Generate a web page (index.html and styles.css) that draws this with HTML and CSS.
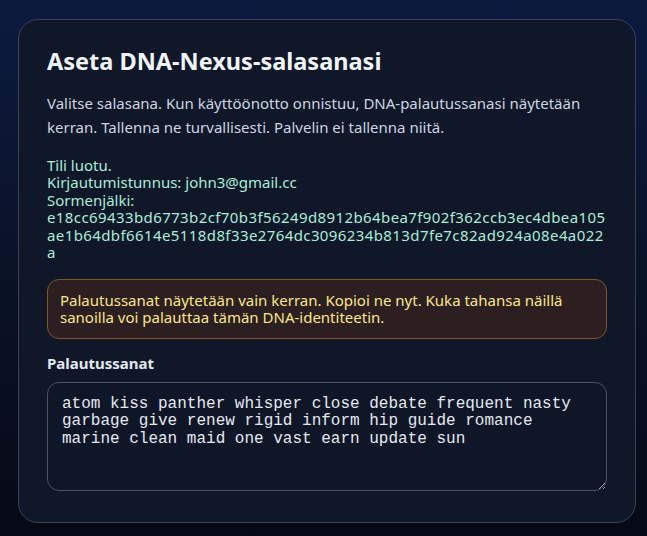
FILE: index.html
```html
<!DOCTYPE html>
<html lang="fi">
<head>
    <meta charset="UTF-8">
    <meta name="viewport" content="width=device-width, initial-scale=1.0">
    <link rel="stylesheet" href="styles.css">
    <title>Aseta DNA-Nexus-salasanasi</title>
</head>
<body>
    <div class="pagina">
        <div class="cartao">
            <h1 class="titulo">Aseta DNA-Nexus-salasanasi</h1>
            <p class="intro">Valitse salasana. Kun käyttöönotto onnistuu, DNA-palautussanasi näytetään kerran. Tallenna ne turvallisesti. Palvelin ei tallenna niitä.</p>

            <div class="status">
                Tili luotu.<br>
                Kirjautumistunnus: john3@gmail.cc<br>
                Sormenjälki:<br>
                <span class="hash">e18cc69433bd6773b2cf70b3f56249d8912b64bea7f902f362ccb3ec4dbea105<br>ae1b64dbf6614e5118d8f33e2764dc3096234b813d7fe7c82ad924a08e4a022<br>a</span>
            </div>

            <div class="aviso">Palautussanat näytetään vain kerran. Kopioi ne nyt. Kuka tahansa näillä sanoilla voi palauttaa tämän DNA-identiteetin.</div>

            <label class="rotulo" for="palavras">Palautussanat</label>
            <textarea id="palavras" class="palavras" readonly>atom kiss panther whisper close debate frequent nasty garbage give renew rigid inform hip guide romance marine clean maid one vast earn update sun</textarea>
        </div>
    </div>
</body>
</html>
```
FILE: styles.css
```css
*{
    box-sizing: border-box;
}
body{
    margin: 0;
    min-height: 100vh;
    background: linear-gradient(180deg, #0c1a3f 0%, #0a1329 45%, #060a16 100%);
    font-family: "Noto Sans", sans-serif;
    color: #cbd5e1;
}
.pagina{
    padding: 19px 11px 13px 18px;
}
.cartao{
    width: 618px;
    height: 504px;
    padding: 27px 28px 31px;
    background: #0f1729;
    border: solid 1px #3a4457;
    border-radius: 20px;
}
.titulo{
    margin: 0 0 15px;
    font-size: 23.5px;
    line-height: 28.8px;
    font-weight: 700;
    color: #f1f5f9;
}
.intro{
    margin: 0 0 18px;
    font-size: 15px;
    line-height: 24px;
    color: #cdd5e0;
}
.status{
    margin: 0 0 17px;
    font-size: 15px;
    line-height: 17.5px;
    color: #a8eed8;
    white-space: nowrap;
}
.hash{
    letter-spacing: 0.4px;
}
.aviso{
    margin: 0 0 16px;
    padding: 12px;
    font-size: 15px;
    line-height: 17.3px;
    color: #fde68a;
    background: #2b1f21;
    border: solid 1px #7a5a22;
    border-radius: 12px;
}
.rotulo{
    display: block;
    margin-bottom: 9px;
    font-size: 15px;
    line-height: 17.5px;
    font-weight: 700;
    color: #e2e8f0;
}
.palavras{
    display: block;
    width: 100%;
    height: 109px;
    padding: 13px 14px;
    font-family: "Liberation Mono", monospace;
    font-size: 16px;
    line-height: 17.6px;
    color: #e5e9f0;
    background: #0e1627;
    border: solid 1px #475366;
    border-radius: 12px;
    outline: none;
}
```
